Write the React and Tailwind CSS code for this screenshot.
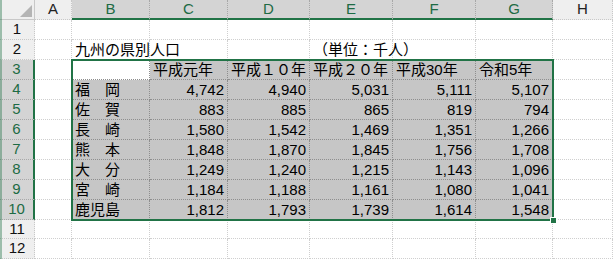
import React from "react";

const COLS = ["A", "B", "C", "D", "E", "F", "G", "H"];

const DATA = {
  3: ["", "平成元年", "平成１０年", "平成２０年", "平成30年", "令和5年"],
  4: ["福　岡", "4,742", "4,940", "5,031", "5,111", "5,107"],
  5: ["佐　賀", "883", "885", "865", "819", "794"],
  6: ["長　崎", "1,580", "1,542", "1,469", "1,351", "1,266"],
  7: ["熊　本", "1,848", "1,870", "1,845", "1,756", "1,708"],
  8: ["大　分", "1,249", "1,240", "1,215", "1,143", "1,096"],
  9: ["宮　崎", "1,184", "1,188", "1,161", "1,080", "1,041"],
  10: ["鹿児島", "1,812", "1,793", "1,739", "1,614", "1,548"],
};

function Cell({ row, ci }) {
  const inSel = row >= 3 && row <= 10 && ci >= 1 && ci <= 6;
  const active = row === 3 && ci === 1;
  let content = null;
  let align = "justify-start pl-[3px]";
  if (row === 2 && ci === 1) content = "九州の県別人口";
  if (row === 2 && ci === 4) content = "（単位：千人）";
  if (inSel) {
    content = DATA[row][ci - 1];
    if (row >= 4 && ci >= 2) align = "justify-end pr-[3px]";
  }
  const bg = inSel && !active ? "bg-[#c6c6c6]" : "bg-white";
  const border = inSel
    ? "border-r border-b border-dotted border-[#8e8e8e]"
    : "border-r border-b border-dotted border-[#cfcfcf]";
  return (
    <div className={`relative flex items-center overflow-visible ${bg} ${border} ${align}`}>
      {content ? (
        <span className="relative z-10 whitespace-nowrap text-[15px] leading-none text-[#000]">{content}</span>
      ) : null}
    </div>
  );
}

export default function App() {
  const rows = [1, 2, 3, 4, 5, 6, 7, 8, 9, 10, 11, 12];
  return (
    <div
      className="relative w-[613px] h-[259px] overflow-hidden bg-white"
      style={{ fontFamily: '"Liberation Sans", "Noto Sans CJK JP", sans-serif' }}
    >
      <div className="grid grid-cols-[35px_37px_78px_78px_82px_83px_83px_77px_1fr] grid-rows-[20px_repeat(10,20px)_19px_20px]">
        {/* header row */}
        <div className="relative bg-[#efefef] border-r border-b border-[#c8c8c8]">
          <svg className="absolute right-[2px] bottom-[2px]" width="12" height="12" viewBox="0 0 12 12">
            <polygon points="12,0 12,12 0,12" fill="#b4b4b4" />
          </svg>
        </div>
        {COLS.map((c, i) => {
          const sel = i >= 1 && i <= 6;
          return (
            <div
              key={c}
              className={
                sel
                  ? "flex items-center justify-center bg-[#d4d4d4] border-r border-dotted border-[#a8a8a8] border-b-2 border-b-[#217346] [border-bottom-style:solid] text-[15px] text-[#1d6b44]"
                  : "flex items-center justify-center bg-[#efefef] border-r border-b border-dotted border-[#c8c8c8] text-[15px] text-[#222]"
              }
            >
              {c}
            </div>
          );
        })}
        {rows.map((r) => (
          <React.Fragment key={r}>
            <div
              className={
                r >= 3 && r <= 10
                  ? "flex items-center justify-center bg-[#d4d4d4] border-b border-dotted border-[#a8a8a8] border-r-2 border-r-[#217346] [border-right-style:solid] text-[15px] text-[#1d6b44]"
                  : "flex items-center justify-center bg-[#efefef] border-r border-b border-dotted border-[#c8c8c8] text-[15px] text-[#111]"
              }
            >
              {r}
            </div>
            {COLS.map((c, ci) => (
              <Cell key={c} row={r} ci={ci} />
            ))}
          </React.Fragment>
        ))}
      </div>
      {/* selection border */}
      <div className="pointer-events-none absolute left-[71px] top-[59px] w-[483px] h-[162px] border-2 border-[#217346] z-20" />
      <div className="absolute left-[550px] top-[217px] w-[7px] h-[7px] bg-[#217346] border border-white z-30" />
      <div className="absolute left-0 top-0 w-[2px] h-[259px] bg-[#217346] opacity-40" />
    </div>
  );
}
